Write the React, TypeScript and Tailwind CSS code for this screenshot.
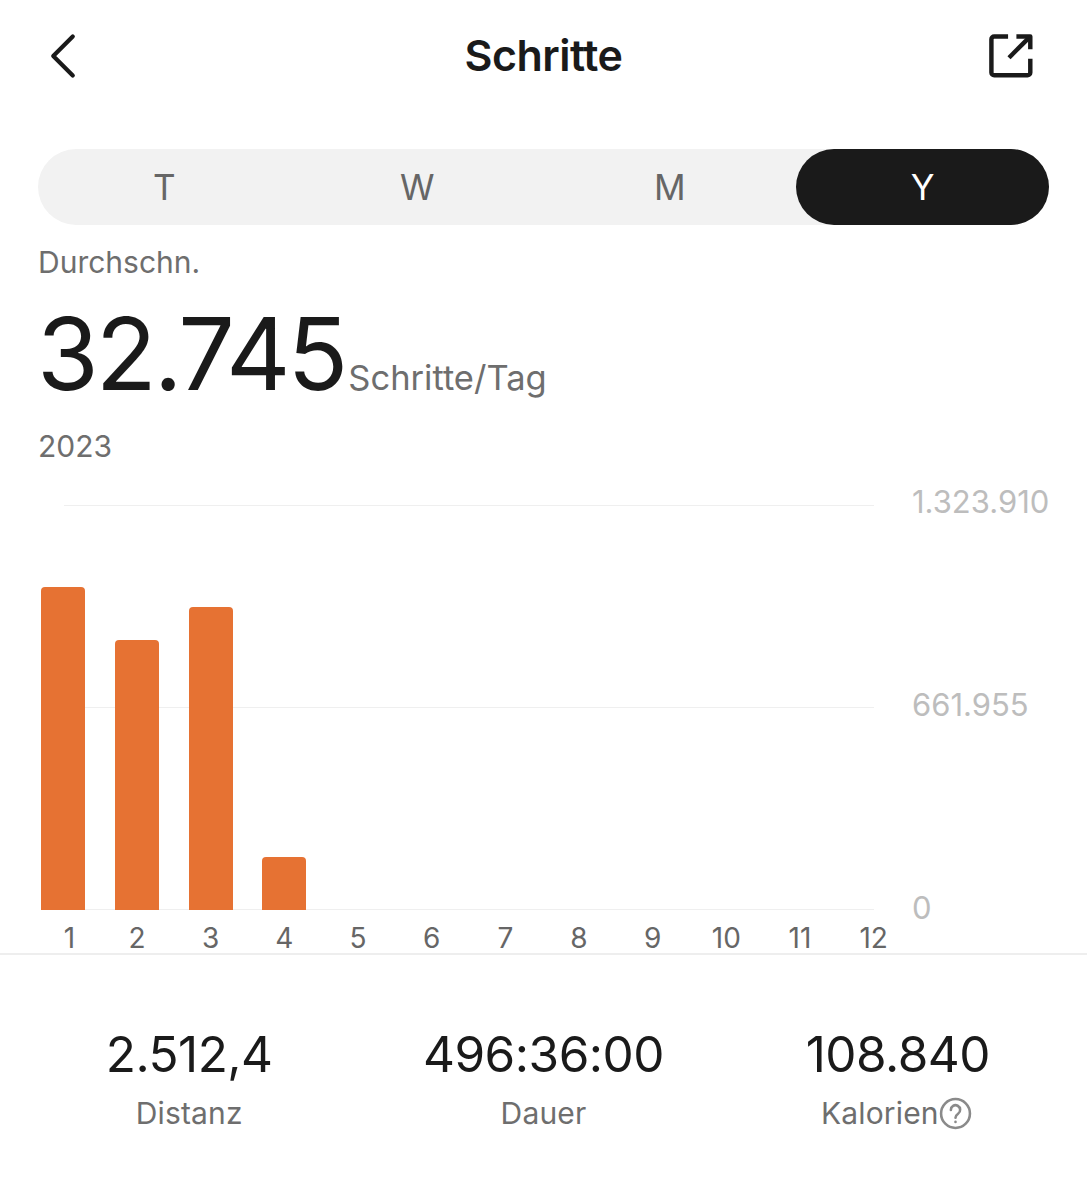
import React from 'react';
import { ChevronLeft } from 'lucide-react';

const ranges = ['T', 'W', 'M', 'Y'];
const months = [1, 2, 3, 4, 5, 6, 7, 8, 9, 10, 11, 12];
const barHeights: Record<number, number> = { 1: 323, 2: 270, 3: 303, 4: 53 };

const stats = [
  { value: '2.512,4', label: 'Distanz' },
  { value: '496:36:00', label: 'Dauer' },
  { value: '108.840', label: 'Kalorien', help: true },
];

export default function App() {
  return (
    <div className="w-[1087px] h-[1200px] bg-white overflow-hidden font-['Inter',sans-serif] text-[#1a1a1a]">
      {/* Header */}
      <div className="h-[112px] grid grid-cols-[1fr_auto_1fr] items-center px-[24px]">
        <ChevronLeft size={78} strokeWidth={1.3} className="text-[#1a1a1a]" />
        <h1 className="text-[43px] font-semibold tracking-[-0.5px] leading-none -mt-[2px]">Schritte</h1>
        <svg width="50" height="50" viewBox="0 0 54 54" fill="none" stroke="#1a1a1a" strokeWidth="4.8" strokeLinejoin="round" strokeLinecap="butt" className="justify-self-end mr-[29px] -mt-[4px]">
          <path d="M26 8H11a3 3 0 0 0-3 3v36a3 3 0 0 0 3 3h36a3 3 0 0 0 3-3V32" />
          <path d="M27 31L49 9" />
          <path d="M35 8h15v14" />
        </svg>
      </div>

      {/* Range switch */}
      <div className="mt-[37px] mx-[38px] w-[1011px] h-[76px] grid grid-cols-4 rounded-full bg-[#f2f2f2]">
        {ranges.map((range) => (
          <div
            key={range}
            className={`flex items-center justify-center rounded-full text-[35px] ${
              range === 'Y' ? 'bg-[#1a1a1a] text-white' : 'text-[#666666]'
            }`}
          >
            {range}
          </div>
        ))}
      </div>

      {/* Summary */}
      <div className="pl-[37px] text-[#6e6e6e]">
        <div className="ml-px mt-[18px] text-[30px] leading-[38px]">Durchschn.</div>
        <div className="mt-[15px] flex items-baseline h-[115px]">
          <span className="text-[100px] leading-[115px] tracking-[-3px] text-[#1a1a1a]">32.745</span>
          <span className="ml-[3px] text-[34.5px] leading-none">Schritte/Tag</span>
        </div>
        <div className="ml-px mt-[16px] text-[30px] leading-[38px]">2023</div>
      </div>

      {/* Chart */}
      <div className="relative mt-[40px] h-[448px]">
        <div className="absolute left-[64px] top-0 w-[810px] h-[405px] flex flex-col justify-between">
          <div className="h-px bg-[#efefef]" />
          <div className="h-px bg-[#efefef]" />
          <div className="h-px bg-[#efefef]" />
        </div>
        <div className="absolute left-[912px] top-[-23px] h-[446px] flex flex-col justify-between text-[31px] leading-[40px] text-[#bdbdbd]">
          <span>1.323.910</span>
          <span>661.955</span>
          <span>0</span>
        </div>
        <div className="relative ml-[26.5px] w-[884px] h-[405px] grid grid-cols-12 items-end">
          {months.map((month) => (
            <div key={month} className="flex justify-center">
              {barHeights[month] ? (
                <div className="w-[44px] rounded-t-[4px] bg-[#e67233]" style={{ height: barHeights[month] }} />
              ) : null}
            </div>
          ))}
        </div>
        <div className="relative ml-[26.5px] w-[884px] grid grid-cols-12 mt-[9px] text-[28px] leading-[38px] text-[#666666]">
          {months.map((month) => (
            <div key={month} className={month === 1 ? 'text-center pl-[12px]' : 'text-center'}>
              {month}
            </div>
          ))}
        </div>
      </div>

      {/* Totals */}
      <div className="border-t-2 border-[#eeeeee] grid grid-cols-3 px-[12px] pt-[69px]">
        {stats.map((stat) => (
          <div key={stat.label} className="flex flex-col items-center">
            <div className="text-[49.5px] leading-[60px] tracking-[-0.5px]">{stat.value}</div>
            <div className="mt-[11px] flex items-center text-[30px] leading-[36px] tracking-[0.15px] text-[#6e6e6e]">
              {stat.label}
              {stat.help && (
                <svg width="33" height="33" viewBox="0 0 32 32" fill="none" stroke="#8a8a8a" strokeWidth="2.5" strokeLinecap="round" className="mr-[3px]">
                  <circle cx="16" cy="16" r="14" />
                  <path d="M11.5 12.5a4.5 4.5 0 1 1 7 3.7c-1.6 1.1-2.5 2-2.5 3.8" />
                  <path d="M16 24v.2" />
                </svg>
              )}
            </div>
          </div>
        ))}
      </div>
    </div>
  );
}
